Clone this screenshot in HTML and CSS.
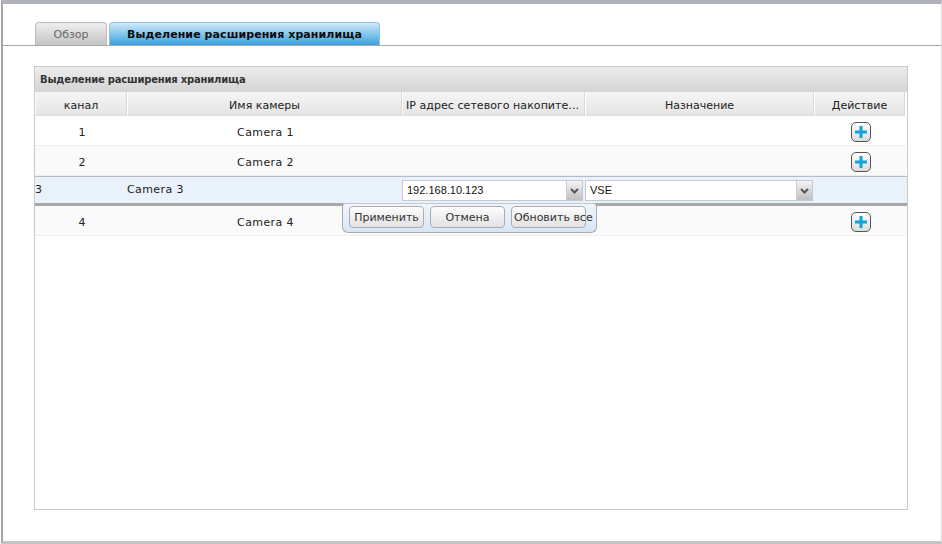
FILE: index.html
```html
<!DOCTYPE html>
<html lang="ru">
<head>
<meta charset="utf-8">
<title>Выделение расширения хранилища</title>
<link rel="stylesheet" href="styles.css">
</head>
<body>
<div class="frame">
  <div class="tabs">
    <div class="tab">Обзор</div>
    <div class="tab active">Выделение расширения хранилища</div>
  </div>
  <div class="panel">
    <div class="panel-title">Выделение расширения хранилища</div>
    <div class="row head">
      <div class="cell">канал</div>
      <div class="cell">Имя камеры</div>
      <div class="cell left">IP адрес сетевого накопите...</div>
      <div class="cell">Назначение</div>
      <div class="cell">Действие</div>
    </div>
    <div class="row body">
      <div class="cell">1</div>
      <div class="cell name">Camera 1</div>
      <div class="cell"></div>
      <div class="cell"></div>
      <div class="cell"><span class="add"><svg viewBox="0 0 12 12" width="12" height="12"><path d="M4.500 0h3v4.500h4.500v3h-4.500v4.500h-3v-4.500h-4.500v-3h4.500z" fill="#0ea5dc"/></svg></span></div>
    </div>
    <div class="row body alt">
      <div class="cell">2</div>
      <div class="cell name">Camera 2</div>
      <div class="cell"></div>
      <div class="cell"></div>
      <div class="cell"><span class="add"><svg viewBox="0 0 12 12" width="12" height="12"><path d="M4.500 0h3v4.500h4.500v3h-4.500v4.500h-3v-4.500h-4.500v-3h4.500z" fill="#0ea5dc"/></svg></span></div>
    </div>
    <div class="row editor">
      <div class="cell">3</div>
      <div class="cell name">Camera 3</div>
      <div class="cell"><div class="combo ip"><span class="value">192.168.10.123</span><span class="arrow"><svg viewBox="0 0 9 6" width="9" height="6"><path d="M1 1l3.500 3.500L8 1" fill="none" stroke="#555" stroke-width="2"/></svg></span></div></div>
      <div class="cell"><div class="combo dest"><span class="value">VSE</span><span class="arrow"><svg viewBox="0 0 9 6" width="9" height="6"><path d="M1 1l3.500 3.500L8 1" fill="none" stroke="#555" stroke-width="2"/></svg></span></div></div>
      <div class="cell"></div>
      <div class="actions">
        <div class="btn">Применить</div>
        <div class="btn">Отмена</div>
        <div class="btn update">Обновить все</div>
      </div>
    </div>
    <div class="row body alt">
      <div class="cell">4</div>
      <div class="cell name">Camera 4</div>
      <div class="cell"></div>
      <div class="cell"></div>
      <div class="cell"><span class="add"><svg viewBox="0 0 12 12" width="12" height="12"><path d="M4.500 0h3v4.500h4.500v3h-4.500v4.500h-3v-4.500h-4.500v-3h4.500z" fill="#0ea5dc"/></svg></span></div>
    </div>
  </div>
</div>
</body>
</html>
```
FILE: styles.css
```css
* { box-sizing: border-box; }
html, body { margin: 0; padding: 0; }
body {
  width: 942px;
  height: 544px;
  background: #fff;
  overflow: hidden;
  font-family: "DejaVu Sans", sans-serif;
  font-size: 11px;
  color: #222;
}
.frame {
  width: 941px;
  height: 544px;
  margin-left: 1px;
  border-top: 4px solid #b0b3b9;
  border-left: 2px solid #a5a5a5;
  border-right: 1px solid #ddd;
  border-bottom: 3px solid #c4c4c4;
  padding-top: 18px;
}
.tabs {
  display: flex;
  gap: 2px;
  height: 24px;
  padding-left: 32px;
  border-bottom: 1px solid #a9a9a9;
}
.tab {
  width: 72px;
  height: 23px;
  border: 1px solid #bbb;
  border-bottom: 0;
  border-radius: 4px 4px 0 0;
  background: linear-gradient(#eeeeee, #c4c4c4);
  color: #666;
  text-align: center;
  line-height: 23px;
}
.tab.active {
  width: 271px;
  border-color: #8fc3df;
  background: linear-gradient(#cfeafa, #7cc3ec 55%, #3c9fdc);
  color: #0a0a0a;
  font-weight: bold;
  letter-spacing: 0.08px;
}
.panel {
  width: 874px;
  height: 444px;
  margin: 20px 0 0 31px;
  border: 1px solid #c9c9c9;
}
.panel-title {
  height: 25px;
  padding-left: 5px;
  background: linear-gradient(#ededed, #d4d4d4);
  color: #333;
  font-weight: bold;
  font-size: 10px;
  letter-spacing: -0.2px;
  line-height: 26px;
}
.row {
  display: grid;
  grid-template-columns: 92px 275px 183px 229px 91px;
  position: relative;
}
.cell { text-align: center; }
.head { height: 24px; }
.head .cell {
  height: 24px;
  line-height: 28px;
  background: linear-gradient(#f5f5f5, #e5e5e5);
  border-left: 1px solid #fff;
  border-right: 1px solid #d8d8d8;
  border-bottom: 1px solid #ddd;
  color: #222;
  white-space: nowrap;
  overflow: hidden;
}
.head .left { text-align: left; padding-left: 3px; letter-spacing: 0.05px; }
.body {
  height: 30px;
  width: 871px;
  border-bottom: 1px solid #ededed;
  line-height: 33px;
}
.body .cell { padding-left: 2px; }
.name { letter-spacing: 0.4px; }
.alt { background: #fafafa; }
.editor {
  height: 30px;
  width: 872px;
  background: #e9f1fb;
  border-top: 1px solid #b9bcc2;
  border-bottom: 3px solid #a9a9a9;
  line-height: 26px;
}
.editor .cell { text-align: left; }
.combo {
  display: flex;
  height: 21px;
  margin-top: 3px;
  border: 1px solid #c5cad1;
  background: #fff;
  font-family: "Liberation Sans", sans-serif;
  font-size: 11px;
  line-height: 19px;
  color: #111;
}
.combo.ip { width: 181px; }
.combo.dest { width: 228px; }
.value { flex: 1; padding-left: 4px; }
.arrow {
  display: flex;
  align-items: center;
  justify-content: center;
  width: 16px;
  background: linear-gradient(#f4f4f4, #bfbfbf);
  border-left: 1px solid #ccc;
}
.add {
  display: inline-flex;
  align-items: center;
  justify-content: center;
  width: 20px;
  height: 20px;
  margin-top: 6px;
  vertical-align: top;
  border: 1px solid #555;
  border-radius: 5px;
  background: linear-gradient(#fff, #dcdcdc);
}
.actions {
  position: absolute;
  z-index: 2;
  left: 307px;
  top: 26px;
  width: 255px;
  height: 30px;
  display: flex;
  gap: 6px;
  padding: 2px 0 0 6px;
  line-height: 19px;
  background: linear-gradient(#f0f5fc, #d8e5f6);
  border: 1px solid #a9adb3;
  border-top-color: #c6cad0;
  border-radius: 4px 4px 6px 6px;
}
.btn {
  width: 75px;
  height: 22px;
  border: 1px solid #adadad;
  border-radius: 4px;
  background: linear-gradient(#fdfdfd, #e2e2e2);
  color: #333;
  text-align: center;
  line-height: 22px;
  white-space: nowrap;
}
.update { text-align: left; padding-left: 2px; }
```
